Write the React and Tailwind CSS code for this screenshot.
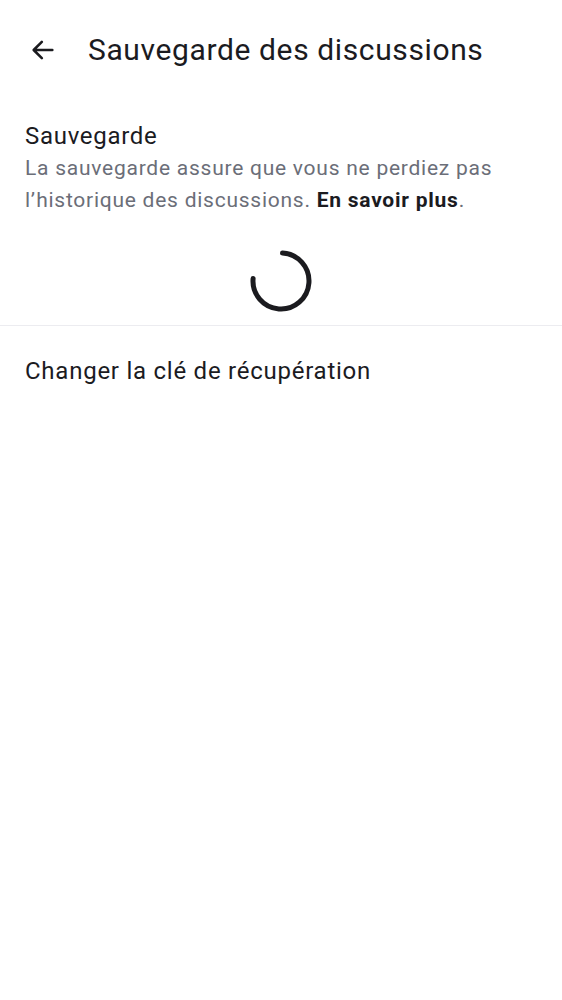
import React from "react";

export default function App() {
  return (
    <div
      className="w-[562px] h-[1000px] bg-white flex flex-col text-[#1b1b1f]"
      style={{ fontFamily: "Roboto, 'Noto Sans', sans-serif" }}
    >
      <header className="h-[100px] flex items-center pl-[29px] gap-[31px]">
        <svg width="28" height="28" viewBox="0 0 24 24" fill="none">
          <path
            d="M20 12H4.5M11 5l-7 7 7 7"
            stroke="#1b1b1f"
            strokeWidth="2.2"
            strokeLinecap="round"
            strokeLinejoin="round"
          />
        </svg>
        <h1 className="text-[30px] leading-none tracking-[0.62px]">
          Sauvegarde des discussions
        </h1>
      </header>

      <section className="px-[25px] pt-[21px]">
        <h2 className="text-[24px] leading-[30px] tracking-[0.7px]">
          Sauvegarde
        </h2>
        <p className="text-[21px] leading-[32px] tracking-[0.75px] text-[#6b6e78] mt-[1px]">
          La sauvegarde assure que vous ne perdiez pas l’historique des
          discussions.{" "}
          <span className="font-bold text-[#1b1b1f]">En savoir plus</span>.
        </p>
      </section>

      <div className="flex justify-center pt-[32px] pb-[11px]">
        <svg width="66" height="66" viewBox="0 0 66 66" fill="none">
          <path
            d="M34.5 5.04 A28 28 0 1 1 5.1 30.5"
            stroke="#1b1b1f"
            strokeWidth="5"
            strokeLinecap="round"
          />
        </svg>
      </div>

      <div className="h-px bg-[#ececf0]" />

      <div className="px-[25px] pt-[30px]">
        <span className="text-[24px] leading-[30px] tracking-[0.75px]">
          Changer la clé de récupération
        </span>
      </div>
    </div>
  );
}
